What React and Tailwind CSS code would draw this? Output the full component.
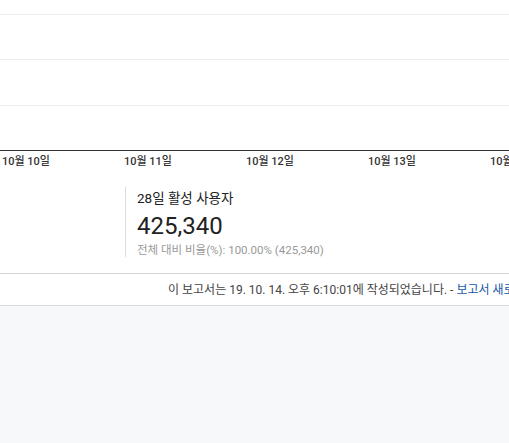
import React from 'react';

const font = { fontFamily: 'Roboto, "Noto Sans CJK KR", sans-serif' };

const dates = ['10월 10일', '10월 11일', '10월 12일', '10월 13일', '10월 14일'];

export default function App() {
  return (
    <div className="w-full h-[443px] bg-[#f7f8fa] overflow-hidden" style={font}>
      <div className="bg-white border-b border-[#d4d4d4]">
        {/* chart grid */}
        <div className="h-[14px]" />
        <div className="h-[45px] border-t border-[#ececec]" />
        <div className="h-[46px] border-t border-[#ececec]" />
        <div className="h-[45px] border-t border-[#ececec]" />
        <div className="border-t border-[#333]" />
        <div className="flex pl-[2px] pt-[4px] whitespace-nowrap">
          {dates.map((d) => (
            <div key={d} className="w-[122px] shrink-0 text-[11px] leading-[14px] font-medium text-[#333]">
              {d}
            </div>
          ))}
        </div>

        {/* metric */}
        <div className="flex pl-[125px] pt-[18px] pb-[16px]">
          <div className="border-l border-[#dcdcdc] pl-[11px] pt-[3px]">
            <div className="text-[13.5px] leading-[16px] text-[#222]">28일 활성 사용자</div>
            <div className="text-[24px] leading-[28px] text-[#222] mt-[6px]">425,340</div>
            <div className="text-[11.5px] leading-[14px] text-[#999] mt-[3px]">
              전체 대비 비율(%): 100.00% (425,340)
            </div>
          </div>
        </div>
      </div>

      {/* footer */}
      <div className="bg-white border-b border-[#d9d9d9] h-[32px] flex items-center pl-[168px] whitespace-nowrap overflow-hidden">
        <span className="text-[12px] text-[#444]">
          이 보고서는 19. 10. 14. 오후 6:10:01에 작성되었습니다. -{' '}
          <span className="text-[#1558a8]">보고서 새로고침</span>
        </span>
      </div>
    </div>
  );
}
